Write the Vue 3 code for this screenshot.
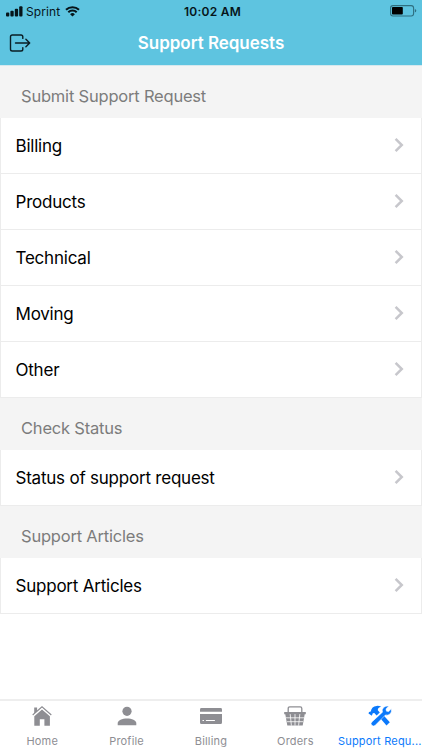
<script setup>
const sections = [
  { title: 'Submit Support Request', rows: ['Billing', 'Products', 'Technical', 'Moving', 'Other'] },
  { title: 'Check Status', rows: ['Status of support request'] },
  { title: 'Support Articles', rows: ['Support Articles'] },
]
const tabs = [
  { id: 'home', label: 'Home' },
  { id: 'profile', label: 'Profile' },
  { id: 'billing', label: 'Billing' },
  { id: 'orders', label: 'Orders' },
  { id: 'support', label: 'Support Requ...', active: true },
]
</script>

<template>
  <div class="screen">
    <header class="top">
      <div class="status">
        <div class="carrier">
          <svg class="signal" width="17" height="11" viewBox="0 0 17 11">
            <rect x="0" y="6.5" width="3.3" height="4" rx="1" />
            <rect x="4.4" y="4.8" width="3.3" height="5.7" rx="1" />
            <rect x="8.8" y="2.8" width="3.3" height="7.7" rx="1" />
            <rect x="13.2" y="0.3" width="3.3" height="10.2" rx="1" />
          </svg>
          <span class="operator">Sprint</span>
          <svg class="wifi" width="15" height="11" viewBox="0 0 15 11">
            <path d="M1 3.8a9.3 9.3 0 0 1 13 0M3.3 6.3a6 6 0 0 1 8.4 0" fill="none" stroke="#06151a" stroke-width="2" />
            <path d="M5.1 8.2a3.5 3.5 0 0 1 4.8 0L7.5 10.6z" />
          </svg>
        </div>
        <div class="time">10:02 AM</div>
        <div class="power">
          <svg width="27" height="12" viewBox="0 0 27 12">
            <rect x="0.6" y="0.6" width="23" height="10.4" rx="2.4" fill="none" stroke="#2f6f80" stroke-width="1.1" />
            <rect x="2" y="2" width="10.8" height="7.6" rx="0.8" fill="#000" />
            <path d="M24.9 4.1q1.4.5 1.4 1.7t-1.4 1.7z" fill="#2f6f80" />
          </svg>
        </div>
      </div>
      <div class="nav">
        <svg class="exit" width="22" height="18" viewBox="0 0 22 18">
          <path d="M13.8 4.4V2.8Q13.8 1 12 1H3.3Q1.5 1 1.5 2.8v12.4q0 1.8 1.8 1.8H12q1.8 0 1.8-1.8v-1.6M6.5 9h14M16.9 5.2L20.7 9l-3.8 3.8" fill="none" stroke="#0a1e25" stroke-width="1.4" stroke-linecap="round" stroke-linejoin="round" />
        </svg>
        <h1>Support Requests</h1>
      </div>
    </header>

    <main>
      <section v-for="s in sections" :key="s.title">
        <h2>{{ s.title }}</h2>
        <ul>
          <li v-for="r in s.rows" :key="r">
            <span>{{ r }}</span>
            <svg width="10" height="16" viewBox="0 0 10 16">
              <path d="M1.6 1.8L7.8 8l-6.2 6.2" fill="none" stroke="#c7c7cc" stroke-width="2.5" />
            </svg>
          </li>
        </ul>
      </section>
    </main>

    <footer>
      <div v-for="t in tabs" :key="t.id" class="tab" :class="{ active: t.active }">
        <svg width="24" height="22" viewBox="0 0 24 22">
          <g v-if="t.id === 'home'">
            <path d="M4.2 2.4h2.9v4L4.2 8.8zM12 4.4l7.9 6.8v9.6h-5.5v-6.6H9.8v6.6H4.3v-9.6z" />
            <path d="M2.7 9.9L12 1.8l9.3 8.1" fill="none" stroke="currentColor" stroke-width="1.3" />
            <path d="M3.4 11L12 3.4l8.6 7.6" fill="none" stroke="#fff" stroke-width=".6" />
          </g>
          <g v-else-if="t.id === 'profile'">
            <circle cx="12" cy="6.3" r="4.6" />
            <path d="M2.7 20.3v-2.2c0-3 4.5-4.7 9.3-4.7s9.3 1.7 9.3 4.7v2.2z" />
          </g>
          <g v-else-if="t.id === 'billing'">
            <path d="M1 6.8V4.4Q1 3 2.4 3h19.2Q23 3 23 4.4v2.4z" />
            <path fill-rule="evenodd" d="M1 8.9h22v8.6q0 1.5-1.4 1.5H2.4Q1 19 1 17.5zM3.5 14.9v1.1h1.5v-1.1zm3.4 0v1.1h9v-1.1z" />
          </g>
          <g v-else-if="t.id === 'orders'">
            <path d="M5.2 7.2V3.4q0-1.6 1.6-1.6h10.4q1.6 0 1.6 1.6v3.8" fill="none" stroke="currentColor" stroke-width="1.3" />
            <path d="M1.2 7h21.6v2.2h-1.1l-2 11.4H4.3l-2-11.4H1.2z" />
            <path d="M3 12.8h18M4 16.7h16M7.2 9.1l1.2 11.5M12 9.1v11.5M16.8 9.1l-1.2 11.5" fill="none" stroke="#fff" stroke-width=".8" />
          </g>
          <g v-else>
            <path d="M.5 8.6Q.4 6.5 2.8 6.4 3.6 1.2 8.6.9q2.6-.2 4.6.9-3.6.8-3.4 3.4l2 2.3-3.2 2.9-2.3-2.5-1.5.3-1 2.6z" />
            <path d="M10.8 11.4L13.9 8.600l7.900 8.700-3.300 3.100z" />
            <path d="M20.700 1l-2.800 3 .6 2.200 2.200.4 2.500-2.900q.8 3.500-1.200 5.300-1.900 1.700-4.500.9L7.200 20.300q-1.700 1.400-3.400-.1t.1-3.300L14.500 7.200q-.8-2.800 1.100-4.700T20.700 1z" stroke="#fff" stroke-width=".5" />
          </g>
        </svg>
        <span>{{ t.label }}</span>
      </div>
    </footer>
  </div>
</template>

<style>
body {
  margin: 0;
  background: #fff;
}
</style>

<style scoped>
.screen {
  width: 422px;
  height: 750px;
  display: flex;
  flex-direction: column;
  overflow: hidden;
  background: #fff;
  font-family: Inter, "Liberation Sans", sans-serif;
}
.top {
  height: 65px;
  flex: none;
  background: #5ec4e0;
  border-bottom: 1px solid #d5e8ee;
}
.status {
  height: 22px;
  display: grid;
  grid-template-columns: 1fr auto 1fr;
  align-items: center;
  color: #06151a;
}
.carrier {
  display: flex;
  align-items: center;
  padding-left: 6px;
  fill: #06151a;
}
.operator {
  font-size: 12px;
  letter-spacing: 0.1px;
  margin: 0 5px 0 3px;
}
.time {
  font-size: 12px;
  font-weight: 600;
  letter-spacing: 0.25px;
  padding-left: 3px;
}
.power {
  display: flex;
  justify-content: flex-end;
  padding-right: 5px;
}
.nav {
  height: 42px;
  display: grid;
  grid-template-columns: 1fr auto 1fr;
  align-items: center;
}
.exit {
  margin-left: 9px;
  margin-top: -1px;
}
h1 {
  margin: 0;
  font-size: 17px;
  font-weight: 600;
  color: #fff;
  line-height: 42px;
  letter-spacing: -0.03px;
}
h2 {
  margin: 0;
  height: 52px;
  box-sizing: border-box;
  padding: 8px 21px 0;
  background: #f4f4f4;
  color: #7c7c7c;
  font-size: 16.5px;
  font-weight: 400;
  line-height: 44px;
  letter-spacing: -0.2px;
}
ul {
  margin: 0;
  padding: 0;
  list-style: none;
}
li {
  height: 56px;
  box-sizing: border-box;
  display: flex;
  align-items: center;
  justify-content: space-between;
  padding: 0 17px 0 14.5px;
  border: 1px solid #ececec;
  border-top: 0;
  font-size: 17px;
  letter-spacing: -0.22px;
  color: #000;
}
li svg {
  margin-top: -2px;
}
footer {
  height: 49px;
  flex: none;
  margin-top: auto;
  display: grid;
  grid-template-columns: repeat(5, 1fr);
  border-top: 2px solid #eeeeee;
}
.tab {
  min-width: 0;
  display: flex;
  flex-direction: column;
  align-items: center;
  padding-top: 4px;
  color: #8e8e93;
  fill: currentColor;
  font-size: 11px;
  line-height: 14px;
  letter-spacing: 0.2px;
  white-space: nowrap;
}
.tab span {
  margin-top: 7px;
}
.active {
  color: #0b79fb;
}
</style>
